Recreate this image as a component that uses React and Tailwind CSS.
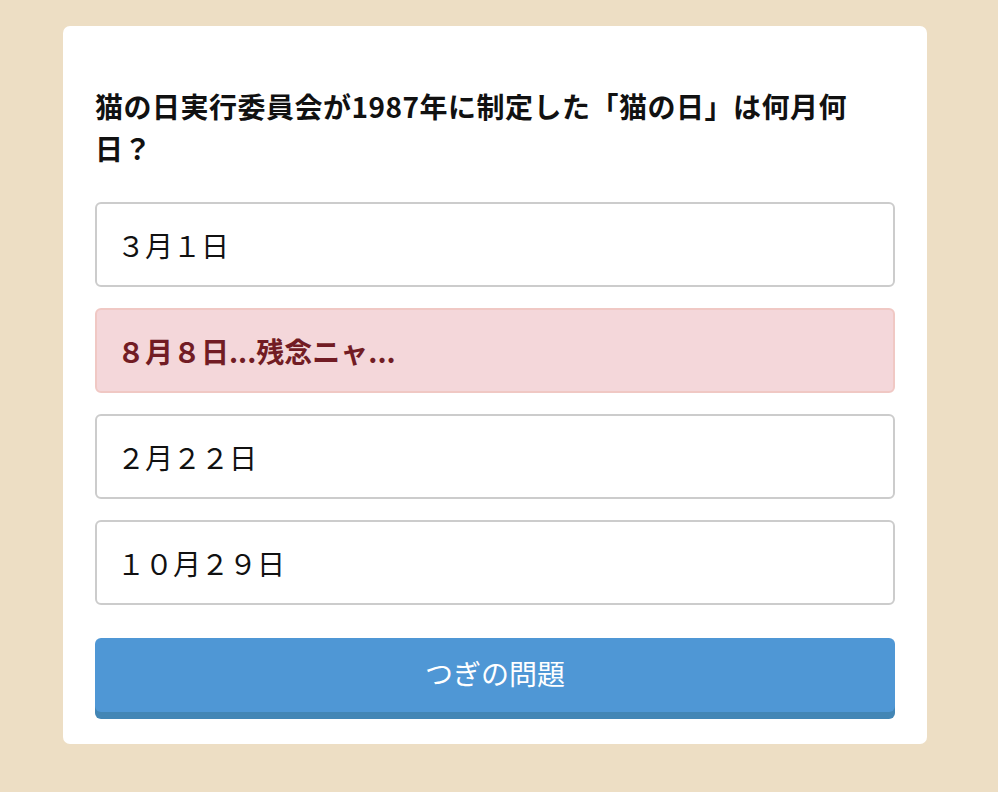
import { useState } from 'react';

const choices = [
  { id: 1, label: '３月１日' },
  { id: 2, label: '８月８日', wrong: true },
  { id: 3, label: '２月２２日' },
  { id: 4, label: '１０月２９日' },
];

export default function App() {
  const [picked] = useState(2);

  return (
    <div
      className="min-h-screen bg-[#eddec4] pt-[26px] pb-[48px]"
      style={{ fontFamily: '"Noto Sans CJK JP", "Noto Sans", sans-serif' }}
    >
      <div className="ml-[63px] w-[864px] bg-white rounded-[7px] px-[32px] pt-[59px] pb-[32px]">
        <h2 className="text-[28px] leading-[42px] font-bold text-[#111] w-[770px] tracking-[0.5px]">
          猫の日実行委員会が1987年に制定した「猫の日」は何月何日？
        </h2>

        {/* Choices */}
        <div className="mt-[33px] flex flex-col gap-[21px]">
          {choices.map((c) =>
            c.wrong && picked === c.id ? (
              <div
                key={c.id}
                className="h-[85px] flex items-center px-[20px] rounded-[6px] border-2 border-[#f0c8c4] bg-[#f4d7da] text-[#721c24] text-[28px] font-bold leading-[42px]"
              >
                {c.label}...残念ニャ...
              </div>
            ) : (
              <button
                key={c.id}
                className="h-[85px] flex items-center px-[20px] rounded-[6px] border-2 border-[#cccccc] bg-white text-[#111] text-[28px] leading-[42px] text-left"
              >
                {c.label}
              </button>
            )
          )}
        </div>

        <button className="mt-[33px] w-full h-[74px] pb-[4px] rounded-[6px] bg-[#4f97d5] text-white text-[28px] shadow-[0_7px_0_#4386b5]">
          つぎの問題
        </button>
      </div>
    </div>
  );
}
